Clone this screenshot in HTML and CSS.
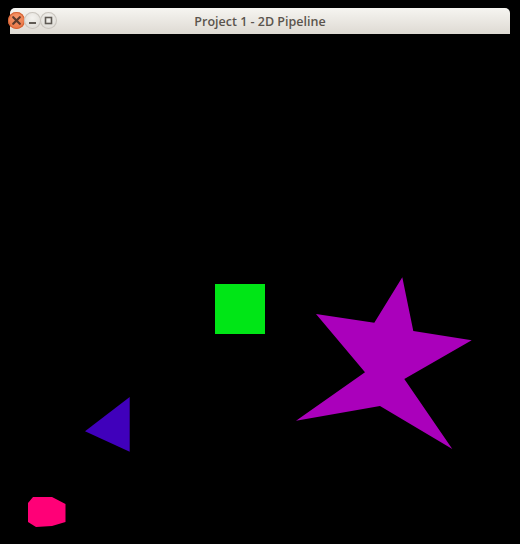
FILE: index.html
```html
<!DOCTYPE html>
<html>
<head>
<meta charset="utf-8">
<link rel="stylesheet" href="styles.css">
</head>
<body>
<div class="window">
  <div class="titlebar">
    <div class="buttons">
      <span class="btn close">
        <svg width="17" height="17" viewBox="0 0 17 17"><path d="M5.2 5.2 L11.8 11.8 M11.8 5.2 L5.2 11.8" stroke="#5b3a2c" stroke-width="2.2" stroke-linecap="round"/></svg>
      </span>
      <span class="btn">
        <svg width="17" height="17" viewBox="0 0 17 17"><rect x="5" y="10" width="7" height="2" fill="#5f5a54"/></svg>
      </span>
      <span class="btn">
        <svg width="17" height="17" viewBox="0 0 17 17"><rect x="5.5" y="5.5" width="6" height="6" fill="none" stroke="#5f5a54" stroke-width="1.6"/></svg>
      </span>
    </div>
    <div class="title">Project 1 - 2D Pipeline</div>
  </div>
  <svg class="canvas" width="520" height="510" viewBox="0 34 520 510">
    <rect x="215" y="284" width="50" height="50" fill="#00e616"/>
    <polygon fill="#aa00bb" points="402.3,277.3 413.3,331 471.7,340.3 404.3,379 452.3,449 380,406 296,420.7 365,372.3 316,314 374.3,322.7"/>
    <polygon fill="#4000bb" points="129.7,397 85,431.3 129.7,451.7"/>
    <polygon fill="#ff0077" points="33,497 52,497 65.5,504 65.5,522 52,526 36,527 28,522 28,503"/>
  </svg>
</div>
</body>
</html>
```

FILE: styles.css
```css
html, body {
  margin: 0;
  padding: 0;
  background: #000;
}
body {
  width: 520px;
  height: 544px;
  overflow: hidden;
}
.window {
  display: flex;
  flex-direction: column;
}
.titlebar {
  position: relative;
  margin: 8px 10px 0 10px;
  height: 26px;
  background: linear-gradient(#f6f5f1, #dedad3);
  border-radius: 5px 5px 0 0;
  display: flex;
  align-items: center;
  justify-content: center;
}
.buttons {
  position: absolute;
  left: -2px;
  top: 4px;
  display: flex;
  gap: 0;
}
.btn {
  width: 16px;
  height: 17px;
  display: flex;
  align-items: center;
  justify-content: flex-start;
}
.btn svg {
  display: block;
  flex: none;
  border-radius: 50%;
  background: radial-gradient(circle at 50% 35%, #f4f3ef, #d8d5cf);
  box-shadow: inset 0 0 0 1px #c9c5be;
}
.btn.close svg {
  background: radial-gradient(circle at 50% 35%, #f79a6e, #e56a3a);
  box-shadow: inset 0 0 0 1px #d46334;
}
.title {
  font-family: "Open Sans", "DejaVu Sans", sans-serif;
  font-weight: 600;
  font-size: 12.5px;
  color: #5a544d;
  margin-top: 1px;
}
.canvas {
  display: block;
}
```
